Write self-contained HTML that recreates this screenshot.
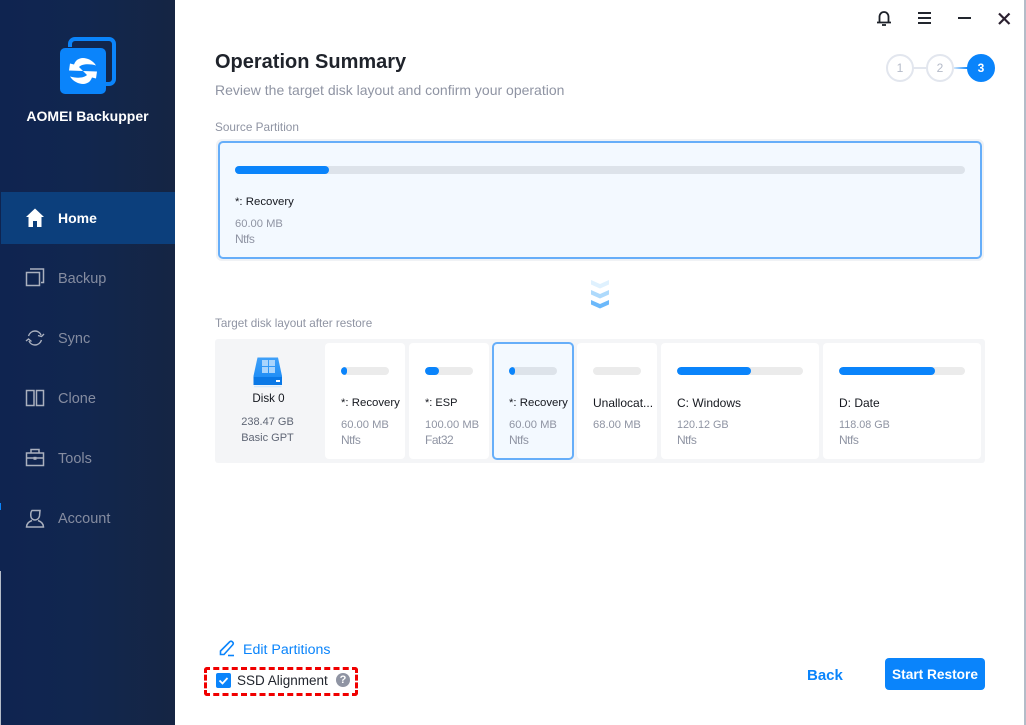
<!DOCTYPE html>
<html><head><meta charset="utf-8">
<style>
*{box-sizing:border-box}
html,body{margin:0;padding:0}
body{width:1026px;height:725px;position:relative;overflow:hidden;background:#fff;font-family:"Liberation Sans",sans-serif;}
.t{position:absolute;white-space:nowrap;line-height:16px}
.abs{position:absolute}
.nav{position:absolute;left:58px;font-size:14.5px;color:#858ca0;font-weight:400;white-space:nowrap;line-height:20px}
.card{position:absolute;top:343px;height:116px;background:#fff;border-radius:4px}
.bar{position:absolute;top:24px;height:8px;border-radius:4px;background:#ebebeb;left:16px;overflow:hidden}
.bar i{position:absolute;left:0;top:0;bottom:0;background:#0a84fb;border-radius:4px}
.name{position:absolute;left:16px;top:52px;font-size:12px;color:#15181f;white-space:nowrap;line-height:16px}
.name.s{font-size:11.4px}
.sub{position:absolute;left:16px;top:75px;font-size:11.2px;color:#8f94a3;white-space:nowrap;line-height:15px}
.sub span{letter-spacing:-.5px;font-size:12px}
.step{position:absolute;top:54px;width:28px;height:28px;border-radius:50%;border:2px solid #e2e6ee;background:#fff;color:#b4bac8;font-size:12px;text-align:center;line-height:24px}
</style></head><body>

<div class="abs" style="left:0;top:0;width:175px;height:725px;background:linear-gradient(90deg,#0f2450 0,#11264f 80px,#152543 175px)"></div>
<div class="abs" style="left:1px;top:192px;width:174px;height:52px;background:#0c3f7c"></div>
<div class="abs" style="left:0;top:503px;width:1px;height:7px;background:#0a84fb"></div>
<div class="abs" style="left:0;top:571px;width:1px;height:154px;background:#b4bcc8"></div>

<svg class="abs" style="left:56px;top:34px" width="64" height="64" viewBox="0 0 64 64">
<path d="M14 13V10a5 5 0 0 1 5-5H53a5 5 0 0 1 5 5V45a5 5 0 0 1-5 5H50" fill="none" stroke="#0a84fb" stroke-width="4"/>
<rect x="4" y="14" width="46" height="46" rx="5" fill="#0a84fb"/>
<path d="M13 36.500L27 37 23 33C26 30 33 29.500 40 31.500 36 25 28 23 24 24.500 20.500 25.500 19 28 18 30.500L14 29.500z" fill="#fff"/>
<path d="M13 36.500L27 37 23 33C26 30 33 29.500 40 31.500 36 25 28 23 24 24.500 20.500 25.500 19 28 18 30.500L14 29.500z" fill="#fff" transform="rotate(180 27 37)"/>
</svg>
<div class="t" style="left:0;width:175px;text-align:center;top:108px;font-size:14px;font-weight:700;color:#fff">AOMEI Backupper</div>

<svg class="abs" style="left:26px;top:208px" width="18" height="19" viewBox="0 0 18 19"><path d="M9 0.500L18 9H15.500V19H11V13H7V19H2.500V9H0z" fill="#fff"/></svg>
<div class="nav" style="top:208px;color:#fff;font-weight:700;font-size:14px">Home</div>

<svg class="abs" style="left:25px;top:267px" width="20" height="20" viewBox="0 0 20 20" fill="none" stroke="#aab0be" stroke-width="1.500"><rect x="1.500" y="5.500" width="13" height="13"/><path d="M5 2H18.500V15.500H16"/></svg>
<div class="nav" style="top:269px">Backup</div>

<svg class="abs" style="left:25px;top:328px" width="20" height="20" viewBox="0 0 20 20" fill="none" stroke="#aab0be" stroke-width="1.400"><path d="M3.500 8C4.500 5 7 3 10 3c2.500 0 5 1.500 6 4"/><path d="M16.500 12C15.500 15 13 17 10 17c-2.500 0-5-1.500-6-4"/><path d="M13 7.500l3.500 1 2.500-2.500"/><path d="M1 13l2.500-2 3 2.500"/></svg>
<div class="nav" style="top:329px">Sync</div>

<svg class="abs" style="left:25px;top:388px" width="20" height="20" viewBox="0 0 20 20" fill="none" stroke="#aab0be" stroke-width="1.500"><path d="M1.500 2.500H9V17.500H1.500z"/><path d="M11.500 2.500H18.500V17.500H11.500z"/></svg>
<div class="nav" style="top:389px">Clone</div>

<svg class="abs" style="left:25px;top:447px" width="20" height="20" viewBox="0 0 20 20" fill="none" stroke="#aab0be" stroke-width="1.500"><rect x="1.500" y="6" width="17" height="12.500"/><path d="M6 6V2.500H14V6"/><path d="M1.500 11H18.500"/><rect x="8.500" y="9.800" width="3" height="3" fill="#aab0be" stroke="none"/></svg>
<div class="nav" style="top:449px">Tools</div>

<svg class="abs" style="left:25px;top:508px" width="20" height="20" viewBox="0 0 20 20" fill="none" stroke="#aab0be" stroke-width="1.500"><path d="M7 2.500H15L14.500 8C14 10.500 12 12 10 12S6 10.500 5.800 8C5.600 5.500 6 3.500 7 2.500z"/><path d="M7 12.500C3 14 1.500 16 1.500 19H18.500C18.500 16 17 14 13 12.500"/></svg>
<div class="nav" style="top:509px">Account</div>

<div class="abs" style="left:1024px;top:0;width:2px;height:725px;background:#b4bcc8"></div>

<svg class="abs" style="left:876px;top:10px" width="16" height="16" viewBox="0 0 16 16" fill="none" stroke="#1d2129" stroke-width="1.800"><path d="M1 12.500H15M3.500 12.500V7c0-3 2-5 4.500-5s4.500 2 4.500 5v5.500"/><path d="M6 15H10"/></svg>
<div class="abs" style="left:918px;top:12px;width:13px;height:2px;background:#22262e"></div>
<div class="abs" style="left:918px;top:17px;width:13px;height:2px;background:#22262e"></div>
<div class="abs" style="left:918px;top:22px;width:13px;height:2px;background:#22262e"></div>
<div class="abs" style="left:958px;top:17px;width:13px;height:2px;background:#22262e"></div>
<svg class="abs" style="left:997px;top:12px" width="14" height="14" viewBox="0 0 14 14" stroke="#2b2030" stroke-width="2.200"><path d="M2 1.500L12.500 12M12.500 1.500L2 12"/></svg>

<div class="t" style="left:215px;top:51px;font-size:20px;line-height:22px;font-weight:700;color:#1f232b">Operation Summary</div>
<div class="t" style="left:215px;top:82px;font-size:14px;color:#8f94a3">Review the target disk layout and confirm your operation</div>

<div class="abs" style="left:913px;top:67px;width:14px;height:2px;background:#e2e6ee"></div>
<div class="abs" style="left:954px;top:67px;width:14px;height:2px;background:linear-gradient(90deg,#cfe6fb,#0a84fb)"></div>
<div class="step" style="left:886px">1</div>
<div class="step" style="left:926px">2</div>
<div class="step" style="left:967px;background:#0a84fb;border-color:#0a84fb;color:#fff;font-weight:700">3</div>

<div class="t" style="left:215px;top:119px;font-size:11.8px;color:#8f94a3">Source Partition</div>

<div class="abs" style="left:216px;top:139px;width:768px;height:122px;border-radius:6px;background:#f0f2f5"></div>
<div class="abs" style="left:218px;top:141px;width:764px;height:118px;background:#f3f9ff;border:2px solid #66aef9;border-radius:5px"></div>
<div class="abs" style="left:235px;top:166px;width:730px;height:8px;border-radius:4px;background:#dde3ea"></div>
<div class="abs" style="left:235px;top:166px;width:94px;height:8px;border-radius:4px;background:#0a84fb"></div>
<div class="t" style="left:235px;top:194px;font-size:11.4px;color:#15181f">*: Recovery</div>
<div class="t" style="left:235px;top:217px;font-size:11.2px;line-height:15px;color:#8f94a3">60.00 MB<br><span style="font-size:12px;letter-spacing:-.5px">Ntfs</span></div>

<svg class="abs" style="left:590px;top:279px" width="20" height="30" viewBox="0 0 20 30">
<path d="M1 1L10 5 19 1V5.500L10 9.500 1 5.500z" fill="#dff1fe"/>
<path d="M1 11L10 15 19 11V15.500L10 19.500 1 15.500z" fill="#aedafc"/>
<path d="M1 21L10 25 19 21V25.500L10 29.500 1 25.500z" fill="#6cb9fb"/>
</svg>

<div class="t" style="left:215px;top:316px;font-size:11.7px;color:#8f94a3">Target disk layout after restore</div>

<div class="abs" style="left:215px;top:339px;width:770px;height:124px;background:#f4f5f7;border-radius:3px"></div>

<svg class="abs" style="left:252px;top:356px" width="32" height="32" viewBox="0 0 32 32">
<defs><linearGradient id="g" x1="0" y1="0" x2="0" y2="1"><stop offset="0" stop-color="#3fa0f8"/><stop offset="1" stop-color="#1487f5"/></linearGradient></defs>
<path d="M5.500 1.500H26L30 20V29H1.500V20z" fill="url(#g)"/>
<path d="M1.500 21H30V29H1.500z" fill="#0a78e6"/>
<path d="M2 30.500H29.500" stroke="#d4e8fb" stroke-width="1.500"/>
<rect x="10" y="4" width="6" height="6" fill="#a9d4fc"/><rect x="17" y="4" width="6" height="6" fill="#a9d4fc"/>
<rect x="10" y="11" width="6" height="6" fill="#a9d4fc"/><rect x="17" y="11" width="6" height="6" fill="#a9d4fc"/>
<rect x="24" y="24" width="4" height="2" fill="#fff"/>
</svg>
<div class="t" style="left:215px;width:107px;text-align:center;top:391px;font-size:11.6px;color:#15181f">Disk 0</div>
<div class="t" style="left:215px;width:105px;text-align:center;top:414px;font-size:11px;color:#5f6675;line-height:16px">238.47 GB<br>Basic GPT</div>

<div class="card" style="left:325px;width:80px"><div class="bar" style="width:48px"><i style="width:6px"></i></div><div class="name s">*: Recovery</div><div class="sub">60.00 MB<br><span>Ntfs</span></div></div>
<div class="card" style="left:409px;width:80px"><div class="bar" style="width:48px"><i style="width:14px"></i></div><div class="name s" style="font-size:11px">*: ESP</div><div class="sub">100.00 MB<br><span>Fat32</span></div></div>
<div class="abs" style="left:492px;top:342px;width:82px;height:118px;background:#f3f9ff;border:2px solid #66aef9;border-radius:5px"></div>
<div class="card" style="left:493px;width:80px;background:transparent"><div class="bar" style="width:48px;background:#dde3ea"><i style="width:6px"></i></div><div class="name s">*: Recovery</div><div class="sub">60.00 MB<br><span>Ntfs</span></div></div>
<div class="card" style="left:577px;width:80px"><div class="bar" style="width:48px"></div><div class="name">Unallocat...</div><div class="sub">68.00 MB</div></div>
<div class="card" style="left:661px;width:158px"><div class="bar" style="width:126px"><i style="width:74px"></i></div><div class="name">C: Windows</div><div class="sub" style="font-size:10.8px">120.12 GB<br><span>Ntfs</span></div></div>
<div class="card" style="left:823px;width:158px"><div class="bar" style="width:126px"><i style="width:96px"></i></div><div class="name">D: Date</div><div class="sub" style="font-size:10.8px">118.08 GB<br><span>Ntfs</span></div></div>

<svg class="abs" style="left:219px;top:640px" width="16" height="17" viewBox="0 0 16 17" fill="none" stroke="#0a84fb" stroke-width="1.600"><path d="M1.500 14.500V11L10.500 2c1-1 2-1 3 0s1 2 0 3L5 14.500z"/><path d="M9 15.500H15"/></svg>
<div class="t" style="left:243px;top:642px;font-size:14.2px;color:#0a84fb">Edit Partitions</div>

<div class="abs" style="left:204px;top:667px;width:154px;height:29px;border:3px dashed #f00000;border-radius:3px"></div>
<div class="abs" style="left:216px;top:673px;width:15px;height:15px;background:#0a84fb;border-radius:2px"></div>
<svg class="abs" style="left:216px;top:673px" width="15" height="15" viewBox="0 0 15 15" fill="none" stroke="#fff" stroke-width="1.800"><path d="M3.500 7.500L6.500 10.500 11.500 5"/></svg>
<div class="t" style="left:237px;top:673px;font-size:13.5px;color:#22262e">SSD Alignment</div>
<div class="abs" style="left:336px;top:673px;width:14px;height:14px;border-radius:50%;background:#8f94a3;color:#fff;font-size:11px;font-weight:700;text-align:center;line-height:14px">?</div>

<div class="t" style="left:807px;top:668px;font-size:15px;font-weight:700;color:#0a84fb">Back</div>
<div class="abs" style="left:885px;top:658px;width:100px;height:32px;background:#0a84fb;border-radius:4px;color:#fff;font-size:13.7px;font-weight:700;text-align:center;line-height:34px">Start Restore</div>

</body></html>
